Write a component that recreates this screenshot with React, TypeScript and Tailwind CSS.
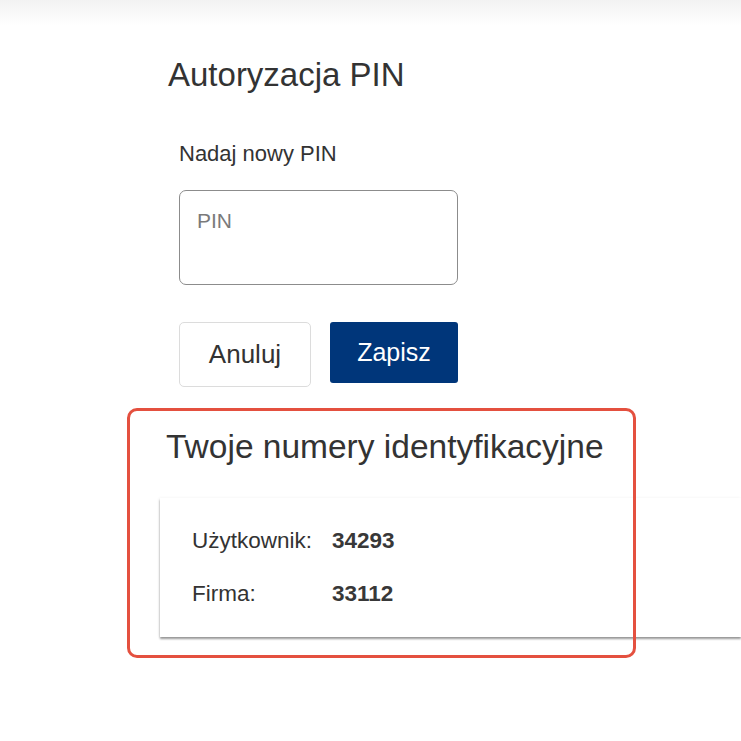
import React from 'react';

const font = { fontFamily: '"Liberation Sans", Arial, sans-serif' };

export default function App() {
  return (
    <div className="min-h-[741px] w-full overflow-hidden bg-white text-[#333]" style={font}>
      {/* górny pasek */}
      <div className="h-[25px] bg-gradient-to-b from-[#f2f2f2] to-white" />

      <main>
        <h1 className="ml-[168px] mt-[30px] text-[33px] leading-[40px] font-normal">
          Autoryzacja PIN
        </h1>

        <div className="ml-[179px] mt-[45px]">
          <label className="block text-[22px] leading-[28px]">Nadaj nowy PIN</label>

          <div className="mt-[22px] h-[95px] w-[279px] rounded-[7px] border border-[#8c8c8c] pl-[17px] pt-[18px]">
            <span className="block text-[21px] leading-[24px] text-[#7a7a7a]">PIN</span>
          </div>

          <div className="mt-[37px] flex items-start gap-[19px]">
            <button className="flex h-[65px] w-[132px] items-center justify-center rounded-[5px] border border-[#dcdcdc] bg-white text-[26px] text-[#333]">
              Anuluj
            </button>
            <button className="flex h-[61px] w-[128px] items-center justify-center rounded-[3px] bg-[#00367a] text-[25px] text-white">
              Zapisz
            </button>
          </div>
        </div>

        {/* numery identyfikacyjne */}
        <section className="relative ml-[127px] mt-[21px] pt-[19px] pb-[21px]">
          <div className="pointer-events-none absolute left-0 top-0 bottom-0 z-10 w-[509px] rounded-[10px] border-[3px] border-[#e4503f]" />

          <h2 className="ml-[39px] text-[33.5px] leading-[40px] font-normal">
            Twoje numery identyfikacyjne
          </h2>

          <div className="ml-[33px] mt-[31px] bg-white pl-[32px] pt-[29px] pb-[29px] shadow-[0_2px_2px_rgba(0,0,0,0.4),-1px_0_3px_rgba(0,0,0,0.06)]">
            <div className="flex text-[22.5px] leading-[28px]">
              <span className="w-[140px]">Użytkownik:</span>
              <span className="font-bold text-[#383838]">34293</span>
            </div>
            <div className="mt-[25px] flex text-[22.5px] leading-[28px]">
              <span className="w-[140px]">Firma:</span>
              <span className="font-bold text-[#383838]">33112</span>
            </div>
          </div>
        </section>
      </main>
    </div>
  );
}
